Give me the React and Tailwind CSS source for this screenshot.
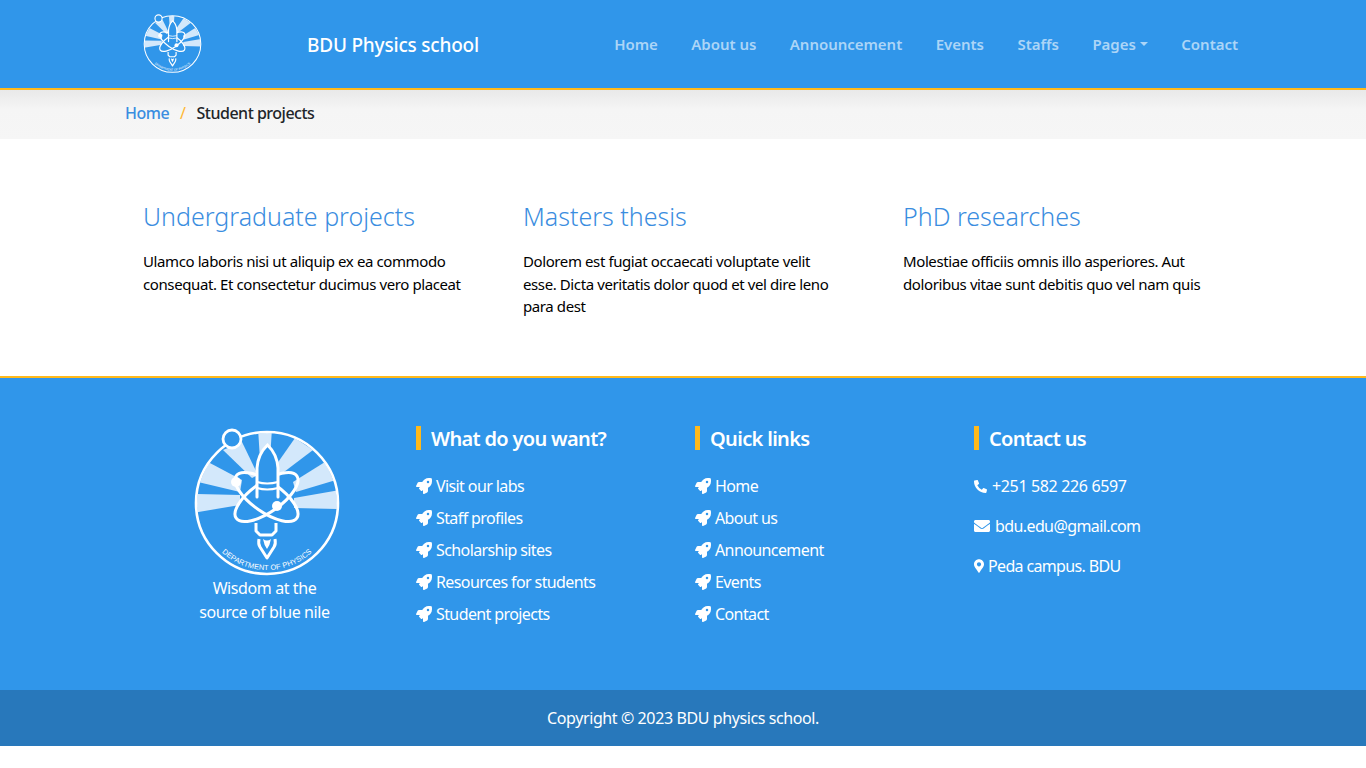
// App.jsx - BDU Physics school, student projects page
import { useId } from 'react'
import { FaRocket, FaPhoneAlt, FaEnvelope, FaMapMarkerAlt } from 'react-icons/fa'

const NAV = ['Home', 'About us', 'Announcement', 'Events', 'Staffs', 'Pages', 'Contact']

const PROJECTS = [
  { title: 'Undergraduate projects', text: 'Ulamco laboris nisi ut aliquip ex ea commodo consequat. Et consectetur ducimus vero placeat' },
  { title: 'Masters thesis', text: 'Dolorem est fugiat occaecati voluptate velit esse. Dicta veritatis dolor quod et vel dire leno para dest' },
  { title: 'PhD researches', text: 'Molestiae officiis omnis illo asperiores. Aut doloribus vitae sunt debitis quo vel nam quis' },
]

const WANT = ['Visit our labs', 'Staff profiles', 'Scholarship sites', 'Resources for students', 'Student projects']
const QUICK = ['Home', 'About us', 'Announcement', 'Events', 'Contact']

const RAYS = [
  '43,30 62,22 78,55 72,58',
  '78,8 92,8 90,40 80,40',
  '115,18 133,30 100,55 94,48',
  '145,42 156,60 116,72 113,62',
  '160,70 160,89 114,88 114,78',
  '28,42 18,62 60,72 62,60',
  '12,74 12,93 60,85 60,75',
]

function Logo({ className }) {
  const id = useId()
  return (
    <svg viewBox="13 8 148 150" className={className}>
      <defs>
        <clipPath id={id + 'c'}><circle cx="87" cy="83" r="70" /></clipPath>
        <path id={id + 't'} d="M 33 122 A 66 66 0 0 0 141 122" />
      </defs>
      <g clipPath={`url(#${id}c)`} fill="#d3e8fb">
        {RAYS.map(p => <polygon key={p} points={p} />)}
      </g>
      <circle cx="87" cy="83" r="71" fill="none" stroke="#fff" strokeWidth="2.6" />
      <circle cx="52" cy="19" r="9" fill="#3096ea" stroke="#fff" strokeWidth="2.8" />
      {/* atom */}
      <g fill="none" stroke="#fff" strokeWidth="3">
        <ellipse cx="86.5" cy="77" rx="37" ry="15" transform="rotate(35 86.5 77)" />
        <ellipse cx="86.5" cy="77" rx="37" ry="15" transform="rotate(-35 86.5 77)" />
      </g>
      {/* rocket hides the upper arcs of the atom */}
      <path d="M77 77 L77 48 Q78 34 87.5 25 Q97 34 98 48 L98 77" fill="#3096ea" stroke="#fff" strokeWidth="3" strokeLinecap="round" />
      <path d="M77 62 Q87 65 98 62 M77 68 Q87 71 98 68" fill="none" stroke="#fff" strokeWidth="2" />
      <path d="M76 103 L76 111 L80 115 L92 115 L96 111 L96 103" fill="none" stroke="#fff" strokeWidth="3" strokeLinejoin="round" />
      <path d="M79 119 Q78 124 80 127 L87 138 L94 127 Q96 124 95 119" fill="none" stroke="#fff" strokeWidth="3" strokeLinejoin="round" />
      <path d="M83 119 Q87 122 91 119 Q90 125 87 129 Q84 125 83 119 Z" fill="#fff" />
      <circle cx="56" cy="62" r="5" fill="#fff" />
      <circle cx="97" cy="86" r="5" fill="#fff" />
      <text fontSize="7.4" fill="#fff" fontFamily="'Liberation Sans', sans-serif" letterSpacing="0.1">
        <textPath href={'#' + id + 't'} startOffset="50%" textAnchor="middle">DEPARTMENT OF PHYSICS</textPath>
      </text>
    </svg>
  )
}

function FooterHeading({ children }) {
  return (
    <h4 className="flex items-center h-6 pt-[2px] mb-6 border-l-[5px] border-[#ffb91a] pl-2.5 text-[20px] font-semibold text-white tracking-[-0.67px]">
      {children}
    </h4>
  )
}

function LinkList({ items }) {
  return (
    <ul className="flex flex-col gap-2">
      {items.map(item => (
        <li key={item} className="flex items-center h-6 gap-1 text-white tracking-[-0.6px]">
          <FaRocket className="w-4 h-4" />
          <span>{item}</span>
        </li>
      ))}
    </ul>
  )
}

export default function App() {
  return (
    <div className="font-['Noto_Sans',sans-serif] text-[15px] tracking-[-0.4px] text-black bg-white">
      {/* header */}
      <header className="bg-[#3096ea] border-b-2 border-[#ffb91a] h-[90px]">
        <div className="w-[1140px] mx-auto h-[88px] flex items-center pl-[30px] pr-[15px]">
          <Logo className="w-[59px] h-[60px]" />
          <span className="ml-[105px] text-[19px] font-medium text-white tracking-[-0.2px] mt-[2px]">BDU Physics school</span>
          <nav className="ml-auto flex items-center gap-[33.5px]">
            {NAV.map(n => (
              <a key={n} className="flex items-center text-[15px] font-semibold text-[#acd5f7] tracking-[-0.03px]">
                {n}
                {n === 'Pages' && <span className="ml-1 border-x-4 border-t-4 border-x-transparent border-t-[#acd5f7]" />}
              </a>
            ))}
          </nav>
        </div>
      </header>

      {/* breadcrumb */}
      <div className="h-[49px] bg-gradient-to-b from-[#e9e9e9] from-0% via-[#f5f5f5] via-40% to-[#f6f6f6]">
        <div className="w-[1116px] mx-auto h-full flex items-center pb-1 text-[16px] font-medium tracking-[-0.5px]">
          <a className="text-[#3a8de0]">Home</a>
          <span className="mx-[11px] text-[#ffb732] font-normal">/</span>
          <span className="text-[#212529]">Student projects</span>
        </div>
      </div>

      {/* projects */}
      <main className="h-[237px]">
        <div className="w-[1140px] mx-auto grid grid-cols-3 pt-[58px]">
          {PROJECTS.map(p => (
            <div key={p.title} className="px-[30px]">
              <h3 className="text-[25px] font-light leading-[38px] text-[#3a8de0] tracking-normal mb-[15px]">{p.title}</h3>
              <p className="leading-[22.5px]">{p.text}</p>
            </div>
          ))}
        </div>
      </main>

      {/* footer */}
      <footer className="bg-[#3096ea] border-t-2 border-[#ffb91a] text-[16px] text-white">
        <div className="w-[1116px] mx-auto h-[312px] grid grid-cols-4 pt-12">
          <div className="px-3 flex flex-col items-center">
            <Logo className="w-[148px] h-[150px] mt-[2px] ml-1" />
            <p className="text-center leading-6 mt-[-2px]">Wisdom at the<br />source of blue nile</p>
          </div>
          <div className="px-3">
            <FooterHeading>What do you want?</FooterHeading>
            <LinkList items={WANT} />
          </div>
          <div className="px-3">
            <FooterHeading>Quick links</FooterHeading>
            <LinkList items={QUICK} />
          </div>
          <div className="px-3">
            <FooterHeading>Contact us</FooterHeading>
            <ul className="flex flex-col gap-4">
              <li className="flex items-center h-6 gap-[5px] tracking-[-0.35px]"><FaPhoneAlt className="w-[13px] h-[13px]" />+251 582 226 6597</li>
              <li className="flex items-center h-6 gap-[5px] tracking-[-0.6px]"><FaEnvelope className="w-4 h-4" />bdu.edu@gmail.com</li>
              <li className="flex items-center h-6 gap-1 tracking-[-0.65px]"><FaMapMarkerAlt className="w-[10px] h-[14px]" />Peda campus. BDU</li>
            </ul>
          </div>
        </div>
        <div className="h-14 bg-[#2878bb] flex items-center justify-center">
          Copyright © 2023 BDU physics school.
        </div>
      </footer>
      <div className="h-[22px]" />
    </div>
  )
}
